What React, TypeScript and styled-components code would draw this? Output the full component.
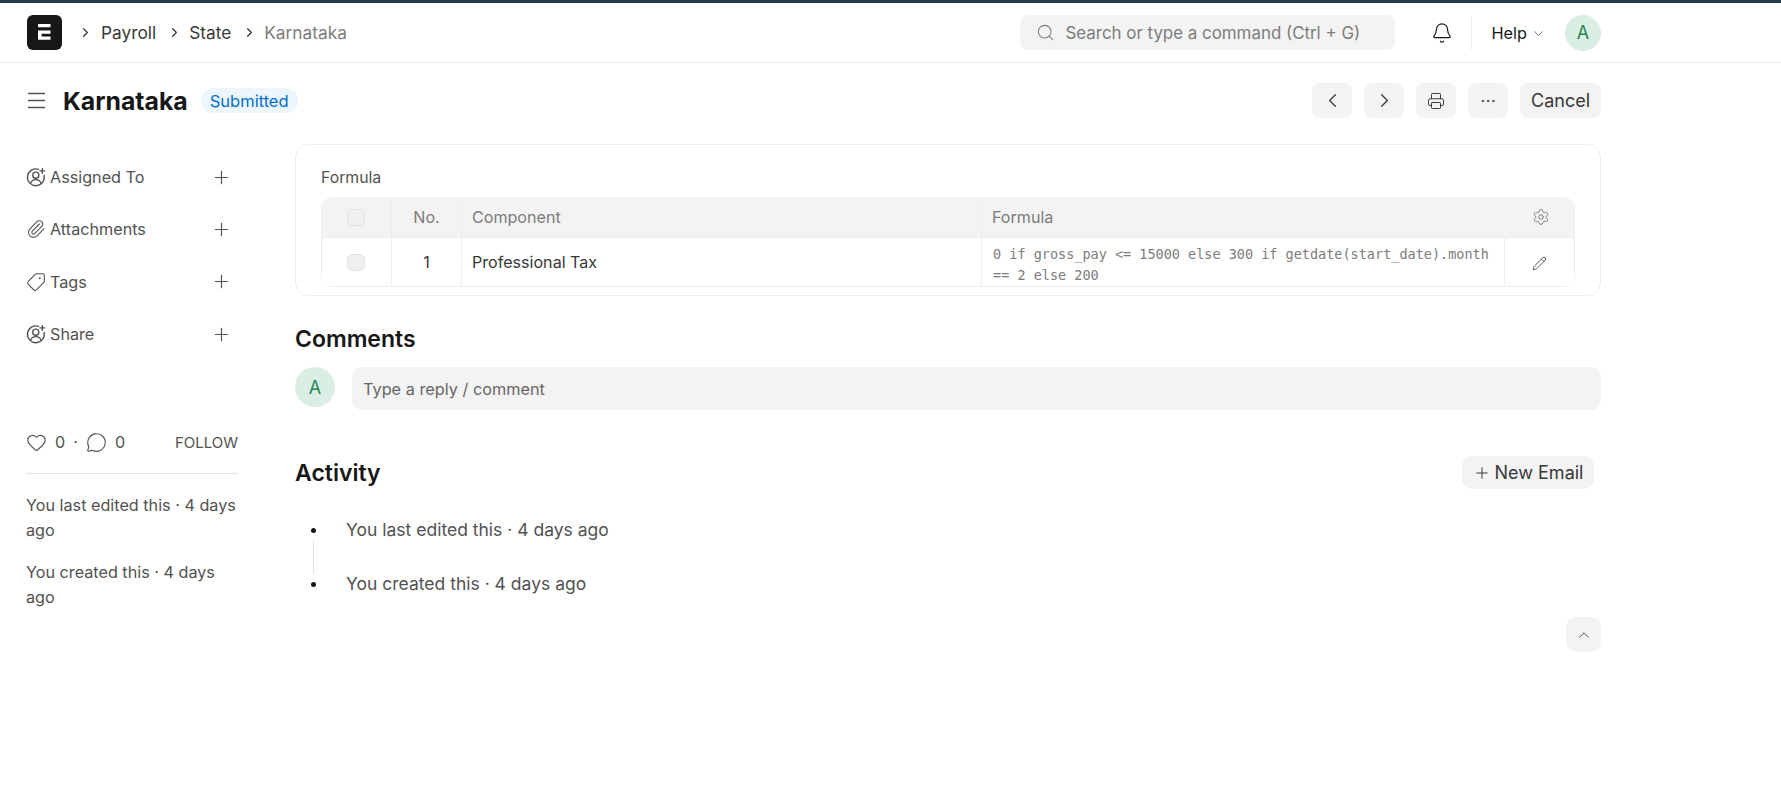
import React from 'react';
import styled, { createGlobalStyle } from 'styled-components';
import { Search, Bell, ChevronDown, ChevronLeft, ChevronRight, ChevronUp, Printer, Ellipsis, Plus, Paperclip, Tag, Heart, MessageCircle, Settings, Pencil } from 'lucide-react';

const GlobalStyle = createGlobalStyle`
  html, body {
    margin: 0;
    padding: 0;
    background: #fff;
    font-family: Inter, "Liberation Sans", sans-serif;
    color: #383838;
  }
  * { box-sizing: border-box; }
`;

const Page = styled.div`
  height: 810px;
  overflow: hidden;
  border-top: 3px solid #253a46;
`;

const Navbar = styled.header`
  height: 60px;
  padding: 12px 180px 0 27px;
  border-bottom: 1px solid #ededed;
  display: flex;
  align-items: flex-start;
`;

const Logo = styled.div`
  width: 35px;
  height: 35px;
  margin-right: 16px;
  border-radius: 6px;
  background: #171717;
  display: flex;
  align-items: center;
  justify-content: center;
`;

const Crumbs = styled.nav`
  height: 35px;
  display: flex;
  align-items: center;
  font-size: 17.3px;
`;

const Crumb = styled.span<{ $current?: boolean }>`
  color: ${(p) => (p.$current ? '#7c7c7c' : '#383838')};
  margin-right: 11px;
`;

const CrumbSep = styled(ChevronRight)`
  width: 15px;
  height: 15px;
  margin-right: 7px;
  color: #383838;
  &:first-child {
    margin-right: 8px;
  }
`;

const NavRight = styled.div`
  margin-left: auto;
  display: flex;
  align-items: center;
  height: 35px;
`;

const SearchBox = styled.div`
  width: 375px;
  height: 35px;
  margin-right: 36px;
  padding-left: 16px;
  background: #f3f3f3;
  border-radius: 8px;
  display: flex;
  align-items: center;
  gap: 10px;
  font-size: 16.9px;
  color: #7c7c7c;
`;

const NavDivider = styled.div`
  width: 1px;
  height: 34px;
  margin: 0 19px 0 18px;
  background: #ededed;
`;

const HelpLabel = styled.span`
  font-size: 16.3px;
  color: #171717;
`;

const HelpChevron = styled(ChevronDown)`
  width: 15px;
  height: 15px;
  margin: 2px 19px 0 4px;
  color: #525252;
`;

const Avatar = styled.div<{ $size: number }>`
  width: ${(p) => p.$size}px;
  height: ${(p) => p.$size}px;
  flex: none;
  border-radius: 50%;
  background: #daeee3;
  color: #218850;
  font-size: 18px;
  display: flex;
  align-items: center;
  justify-content: center;
`;

const PageHead = styled.div`
  width: 1601px;
  padding: 20px 0 0 27px;
  height: 81px;
  display: flex;
  align-items: flex-start;
`;

const TitleGroup = styled.div`
  height: 35px;
  display: flex;
  align-items: center;
`;

const Title = styled.h1`
  margin: 0 13px 0 17px;
  font-size: 24.8px;
  font-weight: 700;
  color: #171717;
`;

const Badge = styled.span`
  height: 25px;
  padding: 0 9px;
  border-radius: 12px;
  background: #edf6fd;
  color: #0070cc;
  font-size: 16.5px;
  display: flex;
  align-items: center;
`;

const Actions = styled.div`
  margin-left: auto;
  display: flex;
  gap: 12px;
`;

const IconButton = styled.button`
  width: 40px;
  height: 35px;
  padding: 0;
  border: 0;
  border-radius: 8px;
  background: #f3f3f3;
  color: #383838;
  display: flex;
  align-items: center;
  justify-content: center;
`;

const TextButton = styled.button`
  width: 81px;
  height: 35px;
  padding: 0;
  border: 0;
  border-radius: 8px;
  background: #f3f3f3;
  color: #383838;
  font-family: inherit;
  font-size: 18px;
`;

const Layout = styled.div`
  width: 1601px;
  padding-left: 26px;
  display: grid;
  grid-template-columns: 212px 1fr;
  column-gap: 57px;
`;

const Sidebar = styled.aside`
  font-size: 16.2px;
  color: #525252;
`;

const SideRow = styled.div`
  height: 52.3px;
  width: 206px;
  display: flex;
  align-items: center;
  gap: 4px;
  &:first-child {
    margin-top: 7px;
  }
`;

const SideAdd = styled(Plus)`
  margin-left: auto;
  width: 21px;
  height: 21px;
  color: #525252;
  stroke-width: 1.3;
`;

const SideIcon = styled.svg`
  width: 20px;
  height: 20px;
  flex: none;
  fill: none;
  stroke: #525252;
  stroke-width: 1.3;
  stroke-linecap: round;
  stroke-linejoin: round;
`;

const LikeRow = styled.div`
  margin-top: 67px;
  height: 30px;
  display: flex;
  align-items: center;
  font-size: 16.2px;
  color: #525252;
`;

const LikeCount = styled.span`
  margin: 0 8px;
`;

const FollowLink = styled.span`
  margin-left: auto;
  font-size: 15px;
`;

const SideDivider = styled.div`
  height: 1px;
  margin: 16px 0 19px;
  background: #e2e2e2;
`;

const SideNote = styled.p`
  margin: 0 0 18px;
  font-size: 16.2px;
  line-height: 24.5px;
  color: #525252;
`;

const Main = styled.main`
  min-width: 0;
`;

const Card = styled.section`
  height: 152px;
  padding: 23px 25px 0;
  border: 1px solid #ededed;
  border-radius: 14px;
`;

const FieldLabel = styled.div`
  height: 20px;
  margin-bottom: 9px;
  font-size: 15.8px;
  line-height: 20px;
  color: #525252;
`;

const GridTable = styled.div`
  height: 90px;
  border-bottom: 1px solid #ededed;
  border-radius: 12px;
  overflow: hidden;
`;

const GridRow = styled.div<{ $head?: boolean }>`
  height: ${(p) => (p.$head ? 41 : 48)}px;
  display: grid;
  grid-template-columns: 70px 70px 520px 523px 72px;
  background: ${(p) => (p.$head ? '#f3f3f3' : '#fff')};
  color: ${(p) => (p.$head ? '#7c7c7c' : '#383838')};
  font-size: 16.1px;
  border-left: 1px solid #ededed;
  border-right: 1px solid #ededed;
  border-bottom: ${(p) => (p.$head ? '1px solid #ededed' : '0')};
`;

const Cell = styled.div<{ $center?: boolean; $open?: boolean }>`
  display: flex;
  align-items: center;
  justify-content: ${(p) => (p.$center ? 'center' : 'flex-start')};
  padding: 0 ${(p) => (p.$center ? 0 : 10)}px;
  border-right: ${(p) => (p.$open ? '0' : '1px solid #ededed')};
  &:last-child {
    border-right: 0;
  }
`;

const Check = styled.span`
  width: 18px;
  height: 17px;
  border: 1px solid #e2e2e2;
  border-radius: 5px;
  background: #f0f0f0;
  margin-right: 2px;
`;

const FormulaCode = styled.div`
  padding: 6px 0 0 1px;
  height: 100%;
  overflow: hidden;
  font-family: "DejaVu Sans Mono", monospace;
  font-size: 13.5px;
  line-height: 21px;
  color: #7c7c7c;
`;

const EditIcon = styled(Pencil)`
  width: 15px;
  height: 15px;
  margin: 3px 3px 0 0;
`;

const Heading = styled.h2`
  margin: 0;
  font-size: 23px;
  font-weight: 600;
  line-height: 28px;
  color: #171717;
`;

const CommentsSection = styled.section`
  margin-top: 29px;
`;

const CommentRow = styled.div`
  margin-top: 14px;
  display: flex;
  gap: 17px;
`;

const CommentBox = styled.div`
  flex: 1;
  height: 43px;
  padding-left: 11px;
  border-radius: 10px;
  background: #f3f3f3;
  display: flex;
  align-items: center;
  font-size: 16.3px;
  color: #666;
`;

const ActivityHead = styled.div`
  margin-top: 46px;
  padding-right: 7px;
  display: flex;
  align-items: center;
  justify-content: space-between;
`;

const NewEmail = styled.button`
  height: 33px;
  width: 132px;
  padding: 0;
  border: 0;
  border-radius: 10px;
  background: #f3f3f3;
  color: #383838;
  font-family: inherit;
  font-size: 18px;
  display: flex;
  align-items: center;
  justify-content: center;
  gap: 4px;
`;

const Timeline = styled.div`
  margin-top: 27px;
  display: grid;
  grid-template-columns: 51px 1fr;
  font-size: 17.5px;
  color: #525252;
`;

const DotCell = styled.div`
  height: 28px;
  padding-left: 16px;
  display: flex;
  align-items: center;
`;

const Dot = styled.span`
  width: 5px;
  height: 5px;
  border-radius: 50%;
  background: #171717;
`;

const TimelineText = styled.div`
  height: 28px;
  line-height: 28px;
`;

const Connector = styled.div`
  width: 1px;
  height: 34px;
  margin: -4px 0 -4px 18px;
  grid-column: 1 / 3;
  background: #e2e2e2;
`;

const ScrollRow = styled.div`
  margin-top: 19px;
  display: flex;
  justify-content: flex-end;
`;

const ScrollTop = styled.button`
  width: 35px;
  height: 35px;
  padding: 0;
  border: 0;
  border-radius: 10px;
  background: #f3f3f3;
  color: #525252;
  display: flex;
  align-items: center;
  justify-content: center;
`;

const LogoMark = () => (
  <svg width="15" height="20" viewBox="0 0 15 20" fill="#fff">
    <path d="M1 1h12.500v3.300H1zM1 7.500h12.500v3.200H4.600v2.800h8.900v3.300H1z" />
  </svg>
);

const MenuIcon = () => (
  <svg width="19" height="17" viewBox="0 0 19 17" fill="none" stroke="#525252" strokeWidth="1.300">
    <path d="M1 1.500h17M1 8.500h17M1 15.500h17" />
  </svg>
);

const UserPlusIcon = () => (
  <SideIcon viewBox="0 0 19 19">
    <path d="M12 2.200A8 8 0 1 0 17.200 8" />
    <circle cx="9.300" cy="7.800" r="2.900" />
    <path d="M4.300 15.600c.8-2.300 2.700-3.600 5-3.600s4.200 1.300 5 3.600" />
    <path d="M15.500 1.500v4.400M13.300 3.700h4.400" />
  </SideIcon>
);

const iconProps = { strokeWidth: 1.3 };

function App() {
  return (
    <Page>
      <GlobalStyle />
      <Navbar>
        <Logo>
          <LogoMark />
        </Logo>
        <Crumbs>
          <CrumbSep />
          <Crumb>Payroll</Crumb>
          <CrumbSep />
          <Crumb>State</Crumb>
          <CrumbSep />
          <Crumb $current>Karnataka</Crumb>
        </Crumbs>
        <NavRight>
          <SearchBox>
            <Search size={19} color="#7c7c7c" {...iconProps} />
            Search or type a command (Ctrl + G)
          </SearchBox>
          <Bell size={22} color="#171717" {...iconProps} />
          <NavDivider />
          <HelpLabel>Help</HelpLabel>
          <HelpChevron {...iconProps} />
          <Avatar $size={36}>A</Avatar>
        </NavRight>
      </Navbar>

      <PageHead>
        <TitleGroup>
          <MenuIcon />
          <Title>Karnataka</Title>
          <Badge>Submitted</Badge>
        </TitleGroup>
        <Actions>
          <IconButton>
            <ChevronLeft size={23} {...iconProps} />
          </IconButton>
          <IconButton>
            <ChevronRight size={23} {...iconProps} />
          </IconButton>
          <IconButton>
            <Printer size={18} {...iconProps} />
          </IconButton>
          <IconButton>
            <Ellipsis size={18} {...iconProps} />
          </IconButton>
          <TextButton>Cancel</TextButton>
        </Actions>
      </PageHead>

      <Layout>
        <Sidebar>
          <SideRow>
            <UserPlusIcon />
            Assigned To
            <SideAdd />
          </SideRow>
          <SideRow>
            <Paperclip size={20} color="#525252" {...iconProps} />
            Attachments
            <SideAdd />
          </SideRow>
          <SideRow>
            <Tag size={20} color="#525252" {...iconProps} style={{ transform: 'scaleX(-1)' }} />
            Tags
            <SideAdd />
          </SideRow>
          <SideRow>
            <UserPlusIcon />
            Share
            <SideAdd />
          </SideRow>

          <LikeRow>
            <Heart size={21} {...iconProps} />
            <LikeCount>0</LikeCount>·
            <MessageCircle size={21} style={{ marginLeft: 8 }} {...iconProps} />
            <LikeCount>0</LikeCount>
            <FollowLink>FOLLOW</FollowLink>
          </LikeRow>
          <SideDivider />
          <SideNote>You last edited this · 4 days ago</SideNote>
          <SideNote>You created this · 4 days ago</SideNote>
        </Sidebar>

        <Main>
          <Card>
            <FieldLabel>Formula</FieldLabel>
            <GridTable>
              <GridRow $head>
                <Cell $center>
                  <Check />
                </Cell>
                <Cell $center>No.</Cell>
                <Cell>Component</Cell>
                <Cell $open>Formula</Cell>
                <Cell $center>
                  <Settings size={18} {...iconProps} />
                </Cell>
              </GridRow>
              <GridRow>
                <Cell $center>
                  <Check />
                </Cell>
                <Cell $center>1</Cell>
                <Cell>Professional Tax</Cell>
                <Cell>
                  <FormulaCode>
                    0 if gross_pay &lt;= 15000 else 300 if getdate(start_date).month == 2 else 200
                  </FormulaCode>
                </Cell>
                <Cell $center>
                  <EditIcon {...iconProps} />
                </Cell>
              </GridRow>
            </GridTable>
          </Card>

          <CommentsSection>
            <Heading>Comments</Heading>
            <CommentRow>
              <Avatar $size={40}>A</Avatar>
              <CommentBox>Type a reply / comment</CommentBox>
            </CommentRow>
          </CommentsSection>

          <ActivityHead>
            <Heading>Activity</Heading>
            <NewEmail>
              <Plus size={18} {...iconProps} />
              New Email
            </NewEmail>
          </ActivityHead>

          <Timeline>
            <DotCell>
              <Dot />
            </DotCell>
            <TimelineText>You last edited this · 4 days ago</TimelineText>
            <Connector />
            <DotCell>
              <Dot />
            </DotCell>
            <TimelineText>You created this · 4 days ago</TimelineText>
          </Timeline>

          <ScrollRow>
            <ScrollTop>
              <ChevronUp size={18} {...iconProps} />
            </ScrollTop>
          </ScrollRow>
        </Main>
      </Layout>
    </Page>
  );
}

export default App;
